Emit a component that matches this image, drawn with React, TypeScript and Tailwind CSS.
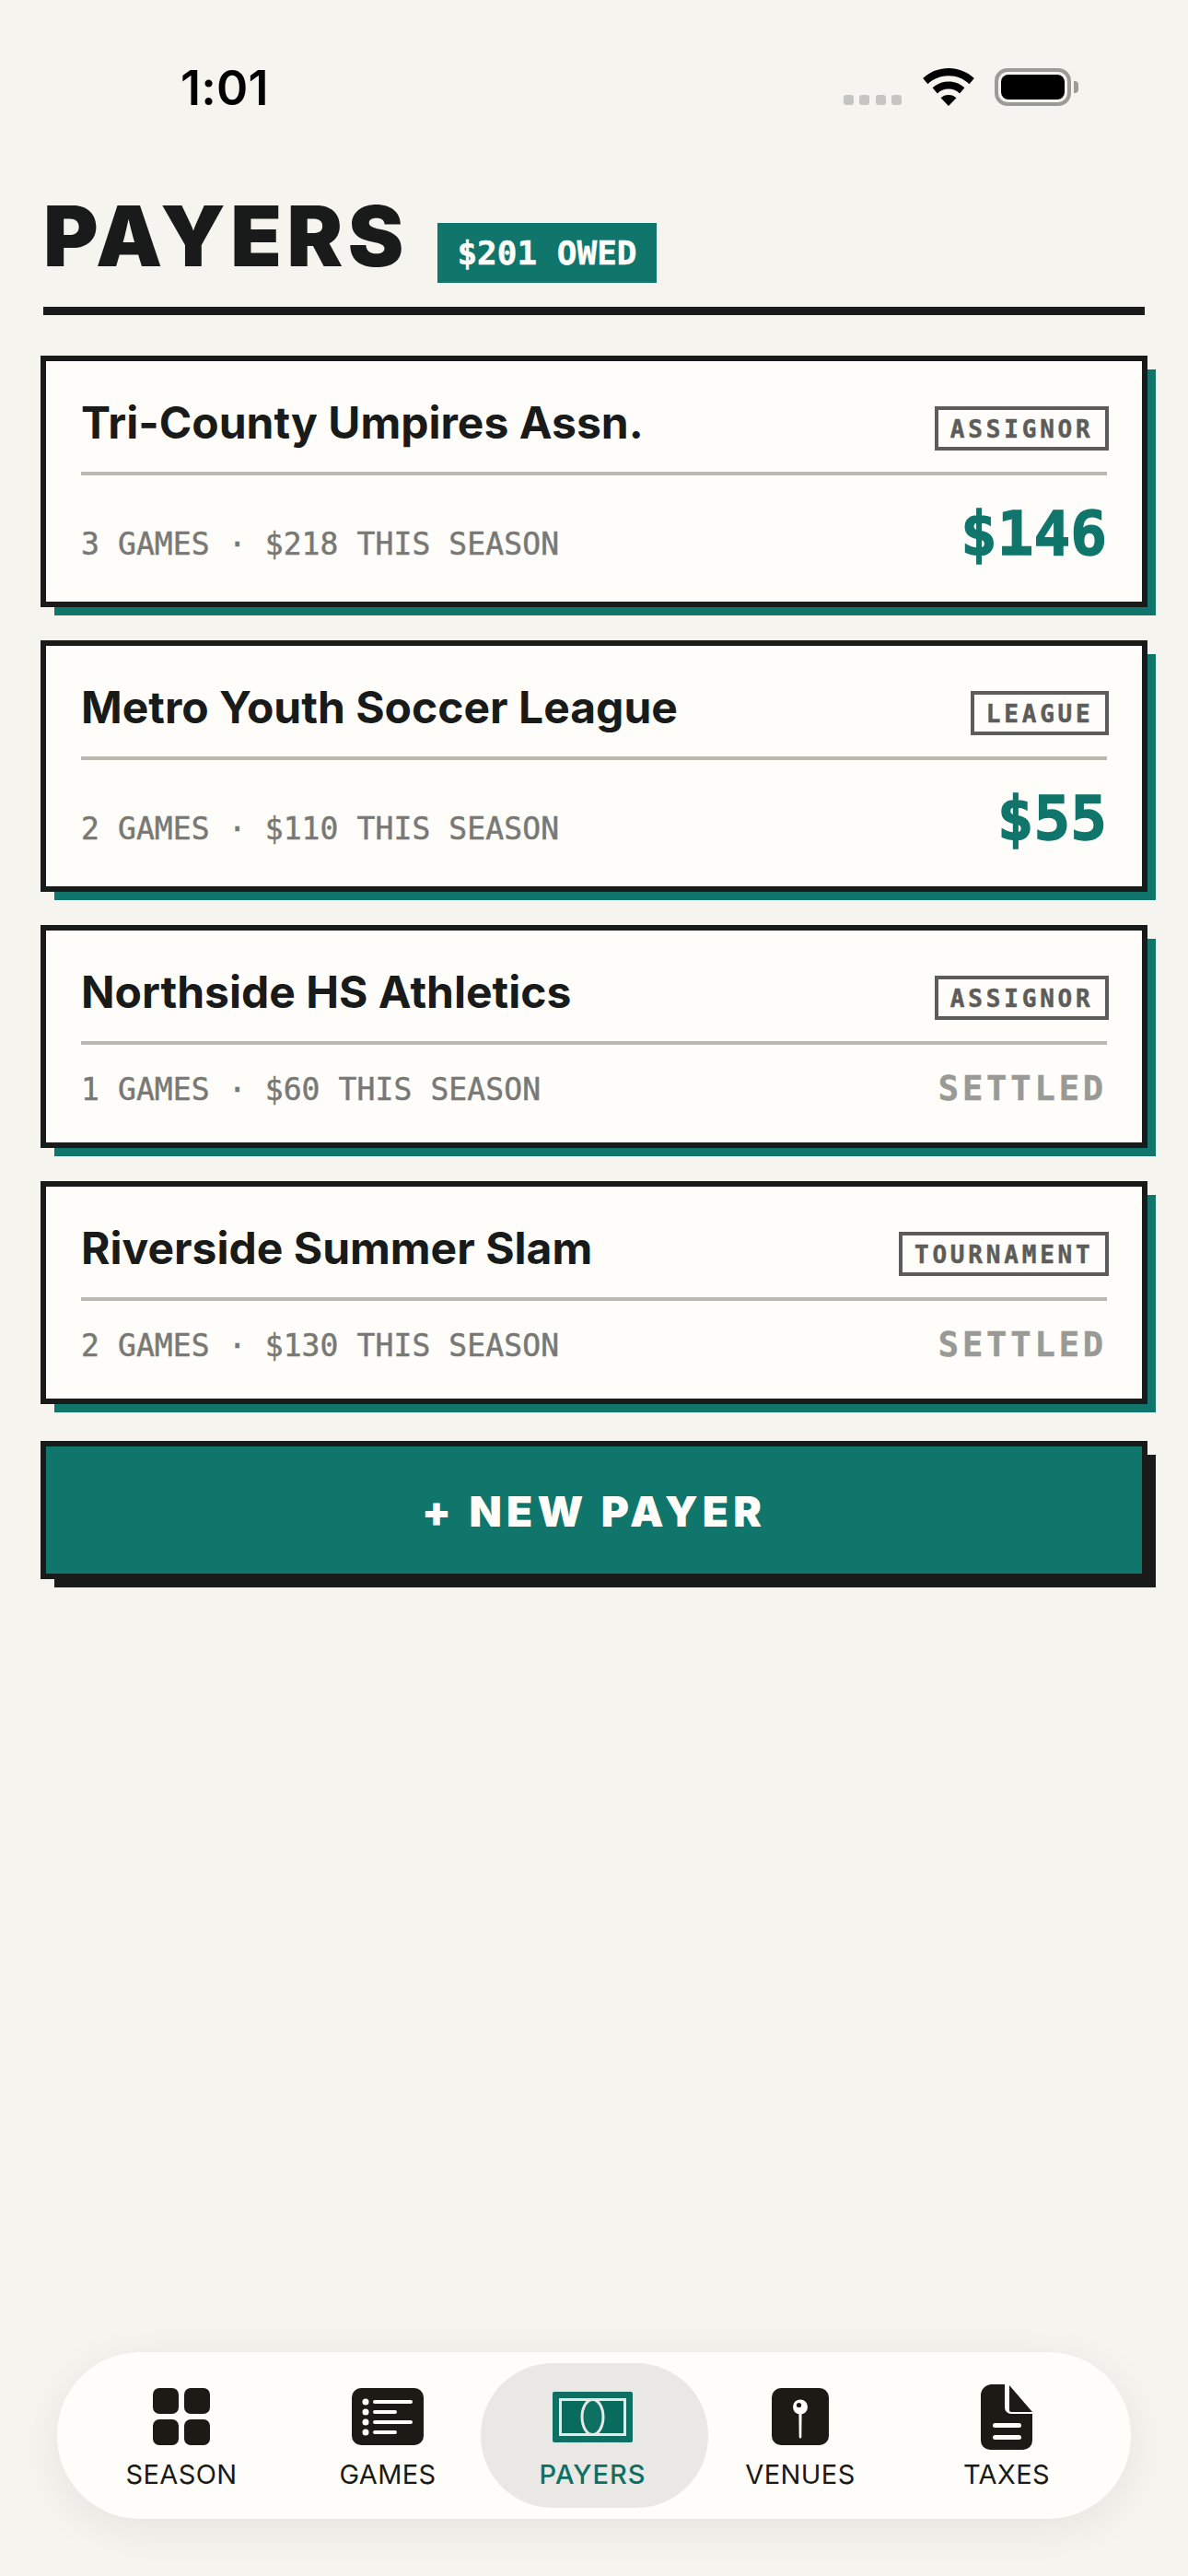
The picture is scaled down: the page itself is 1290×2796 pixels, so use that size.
const PAYERS = [
  { name: 'Tri-County Umpires Assn.', tag: 'ASSIGNOR', meta: '3 GAMES · $218 THIS SEASON', owed: '$146' },
  { name: 'Metro Youth Soccer League', tag: 'LEAGUE', meta: '2 GAMES · $110 THIS SEASON', owed: '$55' },
  { name: 'Northside HS Athletics', tag: 'ASSIGNOR', meta: '1 GAMES · $60 THIS SEASON', owed: null },
  { name: 'Riverside Summer Slam', tag: 'TOURNAMENT', meta: '2 GAMES · $130 THIS SEASON', owed: null },
]

function SeasonIcon() {
  return (
    <svg width="62" height="62" viewBox="0 0 62 62" fill="#1b1a14">
      <rect x="0" y="0" width="28" height="28" rx="7" />
      <rect x="34" y="0" width="28" height="28" rx="7" />
      <rect x="0" y="34" width="28" height="28" rx="7" />
      <rect x="34" y="34" width="28" height="28" rx="7" />
    </svg>
  )
}

function GamesIcon() {
  return (
    <svg width="78" height="62" viewBox="0 0 78 62">
      <rect width="78" height="62" rx="10" fill="#1b1a14" />
      <g fill="#fefdf9">
        <circle cx="15" cy="15" r="3.5" />
        <circle cx="15" cy="26" r="3.5" />
        <circle cx="15" cy="37" r="3.5" />
        <circle cx="15" cy="48" r="3.5" />
        <rect x="23" y="13" width="43" height="4" rx="2" />
        <rect x="23" y="24" width="26" height="4" rx="2" />
        <rect x="23" y="35" width="43" height="4" rx="2" />
        <rect x="23" y="46" width="26" height="4" rx="2" />
      </g>
    </svg>
  )
}

function PayersIcon() {
  return (
    <svg width="87" height="55" viewBox="0 0 87 55">
      <rect width="87" height="55" rx="2" fill="#0e6f63" />
      <rect x="8.5" y="8.5" width="70" height="38" fill="#096a5e" stroke="#e9e8e4" strokeWidth="3" />
      <ellipse cx="43.5" cy="27.5" rx="11.5" ry="19" fill="#0e6f63" stroke="#e9e8e4" strokeWidth="3" />
    </svg>
  )
}

function VenuesIcon() {
  return (
    <svg width="62" height="62" viewBox="0 0 62 62">
      <rect width="62" height="62" rx="10" fill="#1b1a14" />
      <path d="M29.4 30.5h3.2L32.3 59c-.2 2-2.4 2-2.6 0z" transform="translate(0 -6)" fill="#fefdf9" />
      <circle cx="31" cy="20.5" r="8" fill="#fefdf9" />
      <circle cx="29.5" cy="18.5" r="2.6" fill="#1b1a14" />
    </svg>
  )
}

function TaxesIcon() {
  return (
    <svg width="56" height="71" viewBox="0 0 56 71">
      <path d="M12 0h14v25a7 7 0 0 0 7 7h23v29a10 10 0 0 1-10 10H10A10 10 0 0 1 0 61V12A12 12 0 0 1 12 0z" fill="#1b1a14" />
      <path d="M31 1l25 29H33a2 2 0 0 1-2-2z" fill="#1b1a14" />
      <rect x="13" y="42" width="31" height="5" rx="2.5" fill="#fefdf9" />
      <rect x="13" y="55" width="31" height="5" rx="2.5" fill="#fefdf9" />
    </svg>
  )
}

const NAV = [
  { label: 'SEASON', icon: <SeasonIcon /> },
  { label: 'GAMES', icon: <GamesIcon /> },
  { label: 'PAYERS', icon: <PayersIcon />, active: true },
  { label: 'VENUES', icon: <VenuesIcon /> },
  { label: 'TAXES', icon: <TaxesIcon /> },
]

function StatusBar() {
  return (
    <div className="flex h-[42px] items-center justify-between pl-[196px] pr-[119px]">
      <span className="pt-[3px] font-['Inter',sans-serif] text-[52px] font-semibold leading-none tracking-[0.2px] text-black">1:01</span>
      <div className="flex items-end">
        <div className="mb-px flex gap-[6.5px]">
          <span className="h-[11px] w-[11px] rounded-[3px] bg-[#c5c5c1]" />
          <span className="h-[11px] w-[11px] rounded-[3px] bg-[#c5c5c1]" />
          <span className="h-[11px] w-[11px] rounded-[3px] bg-[#c5c5c1]" />
          <span className="h-[11px] w-[11px] rounded-[3px] bg-[#c5c5c1]" />
        </div>
        <svg className="ml-[23px]" width="56" height="41" viewBox="0 0 56 41" fill="#000">
          <path d="M28 0c10.600 0 20.400 4.100 27.800 11l-5.300 6.200C44.500 11.600 36.600 8.300 28 8.300S11.500 11.600 5.500 17.200L.2 11C7.600 4.100 17.400 0 28 0z" />
          <path d="M28 14.500c6.700 0 12.800 2.600 17.400 6.800l-5.300 6.100C36.900 24.400 32.600 22.600 28 22.600s-8.900 1.800-12.100 4.800l-5.300-6.100c4.600-4.200 10.700-6.800 17.400-6.800z" />
          <path d="M28 29c3.300 0 6.300 1.200 8.500 3.300L28 41l-8.500-8.700c2.200-2.100 5.200-3.300 8.500-3.300z" />
        </svg>
        <div className="ml-[22px] flex items-center">
          <div className="h-[41px] w-[83px] rounded-[14px] border-[4px] border-[#9b9b97] p-[3px]">
            <div className="h-full w-full rounded-[8px] bg-black" />
          </div>
          <div className="ml-[3px] h-[13px] w-[5px] rounded-r-[4px] bg-[#9b9b97]" />
        </div>
      </div>
    </div>
  )
}

function PayerCard({ name, tag, meta, owed }: { name: string; tag: string; meta: string; owed: string | null }) {
  return (
    <div className="border-[6px] border-[#181b1a] bg-[#fefdf9] px-[38px] pt-[49px] shadow-[12px_12px_0_-3px_#10766c]">
      <div className="flex h-[48px] items-start justify-between">
        <h2 className="-mt-[14px] font-['Inter',sans-serif] text-[48px] font-bold leading-[64px] text-[#181b1a]">{name}</h2>
        <span className="-mr-[2px] flex h-[48px] items-center border-[4px] border-[#5c5c5a] px-[12.5px] pt-[2px] font-['DejaVu_Sans_Mono',monospace] text-[26px] font-bold leading-none tracking-[3.8px] text-[#5c5c5a] [-webkit-text-stroke:0.5px_#5c5c5a]">
          {tag}
        </span>
      </div>
      <div className="mt-[23px] flex items-baseline justify-between border-t-[4px] border-[#b9b9b2]">
        <span className="font-['DejaVu_Sans_Mono',monospace] text-[33px] leading-[48px] tracking-[0.1px] text-[#787875] [-webkit-text-stroke:0.5px_#787875]">{meta}</span>
        {owed ? (
          <span className="pt-[18px] pb-[27px] font-['DejaVu_Sans_Mono',monospace] text-[66px] font-bold leading-[92px] text-[#10766c] [-webkit-text-stroke:1.5px_#10766c]">{owed}</span>
        ) : (
          <span className="pt-[17px] pb-[28px] font-['DejaVu_Sans_Mono',monospace] text-[37px] font-bold leading-[61px] tracking-[3.9px] text-[#999996] [-webkit-text-stroke:0.5px_#999996]">SETTLED</span>
        )}
      </div>
    </div>
  )
}

function TabBar() {
  return (
    <div className="mx-[62px] mt-auto mb-[62px] flex h-[181px] items-center rounded-[90px] bg-[#fefdf9] px-[23px] shadow-[0_10px_50px_rgba(0,0,0,0.07)]">
      {NAV.map((item) => (
        <div
          key={item.label}
          className={
            item.active
              ? 'relative -mx-[11.5px] flex h-[157px] w-[247px] shrink-0 flex-col items-center rounded-[78px] bg-[#e9e8e4] pr-[3px]'
              : 'relative flex h-[157px] w-[224px] shrink-0 flex-col items-center'
          }
        >
          <div className="flex h-[109px] items-center pt-[7px]">{item.icon}</div>
          <span
            className={
              item.active
                ? "-mt-[5px] font-['Inter',sans-serif] text-[29px] font-medium leading-[34px] tracking-[1px] text-[#0e6f63]"
                : "-mt-[5px] font-['Inter',sans-serif] text-[29px] leading-[34px] tracking-[0.4px] text-[#1b1a14]"
            }
          >
            {item.label}
          </span>
        </div>
      ))}
    </div>
  )
}

export default function App() {
  return (
    <div className="flex h-[2796px] w-[1290px] flex-col overflow-hidden bg-[#f5f4ef] pt-[73px]">
      <StatusBar />
      <div className="px-[47px] pt-[95px]">
        <div className="flex items-end border-b-[9px] border-[#181b1a] pb-[26px]">
          <h1 className="mb-[5px] font-['Inter',sans-serif] text-[91px] font-black leading-[92px] tracking-[5.5px] text-[#181b1a]">PAYERS</h1>
          <span className="ml-[31px] flex h-[65px] w-[238px] items-center justify-center bg-[#10766c] font-['DejaVu_Sans_Mono',monospace] text-[36px] font-bold leading-none text-[#fefdf9] [-webkit-text-stroke:0.5px_#fefdf9]">
            $201 OWED
          </span>
        </div>
      </div>
      <div className="flex flex-col gap-[36px] px-[44px] pt-[44px]">
        {PAYERS.map((payer) => (
          <PayerCard key={payer.name} {...payer} />
        ))}
        <button className="mt-[4px] flex h-[150px] items-center justify-center border-[6px] border-[#181b1a] bg-[#10766c] pt-[3px] font-['Inter',sans-serif] text-[46px] font-black tracking-[5.2px] text-[#fefdf9] shadow-[12px_12px_0_-3px_#181b1a]">
          + NEW PAYER
        </button>
      </div>
      <TabBar />
    </div>
  )
}
